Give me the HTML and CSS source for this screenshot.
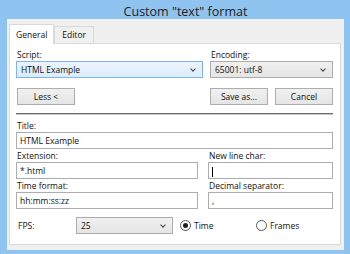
FILE: index.html
```html
<!DOCTYPE html>
<html lang="en">
<head>
    <meta charset="UTF-8" />
    <title>Custom "text" format</title>
    <link rel="stylesheet" href="styles.css">
</head>
<body>
  <div class="window">
    <div class="titlebar">Custom "text" format</div>
    <div class="client">
      <div class="tabs">
        <div class="tab active">General</div>
        <div class="tab">Editor</div>
      </div>
      <div class="panel">
        <div class="row two-top">
          <div class="field">
            <label>Script:</label>
            <div class="select focused">HTML Example<span class="arrow"></span></div>
          </div>
          <div class="field">
            <label>Encoding:</label>
            <div class="select">65001: utf-8<span class="arrow"></span></div>
          </div>
        </div>

        <div class="buttons">
          <button class="btn">Less &lt;</button>
          <div class="spacer"></div>
          <button class="btn">Save as...</button>
          <button class="btn">Cancel</button>
        </div>

        <div class="separator"></div>

        <div class="field">
          <label>Title:</label>
          <div class="input">HTML Example</div>
        </div>

        <div class="row two">
          <div class="field">
            <label>Extension:</label>
            <div class="input">*.html</div>
          </div>
          <div class="field">
            <label>New line char:</label>
            <div class="input"><span class="caret"></span></div>
          </div>
        </div>

        <div class="row two">
          <div class="field">
            <label>Time format:</label>
            <div class="input">hh:mm:ss:zz</div>
          </div>
          <div class="field">
            <label>Decimal separator:</label>
            <div class="input">,</div>
          </div>
        </div>

        <div class="fps-row">
          <span class="fps-label">FPS:</span>
          <div class="select fps">25<span class="arrow"></span></div>
          <span class="radio checked"></span><span class="radio-label">Time</span>
          <span class="radio"></span><span class="radio-label">Frames</span>
        </div>
      </div>
    </div>
  </div>
</body>
</html>
```

FILE: styles.css
```css
* {
    margin: 0;
    padding: 0;
    box-sizing: border-box;
}

body {
    font-family: 'Open Sans', 'Noto Sans', sans-serif;
    font-size: 8.5px;
    color: #111;
    background: #8fc3f0;
}

.window {
    width: 350px;
    height: 254px;
    background: #8fc3f0;
    padding: 0 6px 4px 7px;
    display: flex;
    flex-direction: column;
}

.titlebar {
    height: 19px;
    text-align: center;
    font-size: 12.5px;
    line-height: 23px;
    padding-left: 20px;
    color: #222;
}

.client {
    flex: 1;
    background: #f0f0f0;
    padding: 5px 3px 5px 2px;
    display: flex;
    flex-direction: column;
}

.tabs {
    display: flex;
    align-items: flex-end;
    height: 19px;
}

.tab {
    height: 17px;
    padding: 0 7px;
    line-height: 16px;
    border: 1px solid #d9d9d9;
    border-bottom: none;
    background: #f0f0f0;
}

.tab.active {
    height: 20px;
    background: #fff;
    line-height: 19px;
    margin-bottom: -1px;
    position: relative;
    z-index: 1;
    padding: 0 6px;
}

.panel {
    flex: 1;
    background: #fff;
    border: 1px solid #d9d9d9;
    padding: 5px 7px 0 6px;
}

.row.two-top {
    display: grid;
    grid-template-columns: 187px 123px;
    gap: 7px;
}

.row.two {
    display: grid;
    grid-template-columns: 182px 125px;
    gap: 10px;
}

.field label {
    display: block;
    height: 12px;
    line-height: 12px;
    padding-left: 1px;
}

.select {
    position: relative;
    height: 17px;
    line-height: 15px;
    border: 1px solid #acacac;
    background: linear-gradient(#f0f0f0, #e5e5e5);
    padding-left: 4px;
}

.select.focused {
    border-color: #7eb4ea;
    background: linear-gradient(#ecf4fc, #dcecfc);
}

.arrow {
    position: absolute;
    right: 7px;
    top: 5px;
    width: 4px;
    height: 4px;
    border-right: 1px solid #444;
    border-bottom: 1px solid #444;
    transform: rotate(45deg);
}

.buttons {
    display: flex;
    gap: 7px;
    margin-top: 10px;
    padding-left: 1px;
}

.spacer {
    flex: 1;
}

.btn {
    font-family: inherit;
    font-size: 8.5px;
    color: #111;
    width: 58px;
    height: 17px;
    border: 1px solid #adadad;
    background: linear-gradient(#f0f0f0, #e5e5e5);
}

.separator {
    height: 2px;
    background: #6d6d6d;
    margin: 8px 0 5px;
    border-bottom: 1px solid #c8c8c8;
}

.input {
    height: 17px;
    line-height: 15px;
    border: 1px solid #abadb3;
    padding-left: 3px;
    margin-bottom: 1px;
    background: #fff;
}

.caret {
    display: inline-block;
    width: 1px;
    height: 10px;
    background: #000;
    vertical-align: middle;
}

.fps-row {
    display: flex;
    align-items: center;
    margin-top: 7px;
    padding-left: 2px;
}

.fps-label {
    width: 58px;
}

.select.fps {
    width: 97px;
    margin-right: 7px;
}

.radio {
    width: 11px;
    height: 11px;
    border: 1px solid #555;
    border-radius: 50%;
    position: relative;
    margin-right: 3px;
}

.radio.checked::after {
    content: "";
    position: absolute;
    left: 2px;
    top: 2px;
    width: 5px;
    height: 5px;
    border-radius: 50%;
    background: #1e1e1e;
}

.radio-label {
    width: 62px;
}
```
